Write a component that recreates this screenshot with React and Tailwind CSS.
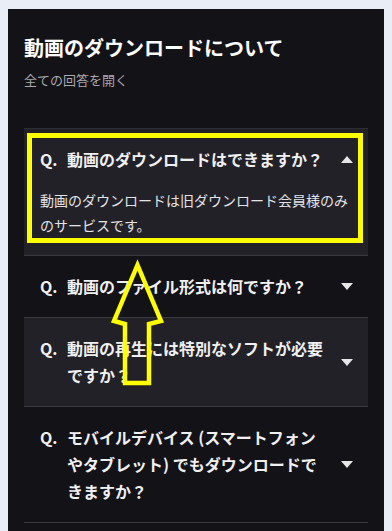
import React from 'react'

const FONT = { fontFamily: '"Noto Sans CJK JP", "Noto Sans", sans-serif' }

const ITEMS = [
  {
    q: '動画のダウンロードはできますか？',
    a: '動画のダウンロードは旧ダウンロード会員様のみのサービスです。',
    open: true,
  },
  { q: '動画のファイル形式は何ですか？' },
  { q: '動画の再生には特別なソフトが必要ですか？' },
  { q: 'モバイルデバイス (スマートフォンやタブレット) でもダウンロードできますか？' },
]

function Caret({ up }) {
  return (
    <svg width="12" height="7" viewBox="0 0 12 7" className="shrink-0">
      {up ? <polygon points="0,7 12,7 6,0" fill="#e6e6e6" /> : <polygon points="0,0 12,0 6,7" fill="#e6e6e6" />}
    </svg>
  )
}

export default function App() {
  return (
    <div className="relative h-[531px] bg-[#e9edf5] pt-[9px] px-2 overflow-hidden" style={FONT}>
      <div className="bg-[#131217] h-full px-4 pt-[25px]">
        <h2 className="text-[20px] leading-[28px] font-bold text-white">動画のダウンロードについて</h2>
        <p className="mt-2 text-[13px] leading-5 text-[#a9a9ae]">全ての回答を開く</p>

        <div className="mt-[38px] border-t border-[#2e2d33]">
          {ITEMS.map((item, i) => (
            <div
              key={i}
              className={`border-b border-[#3a3940] ${i % 2 === 0 ? 'bg-[#222127]' : 'bg-[#131217]'} pl-4 pr-[15px] py-[17px]`}
            >
              <div className="flex items-center">
                <div className="flex flex-1 text-[16px] leading-[27px] font-bold text-[#f0f0f2]">
                  <span className="w-[27px] shrink-0">Q.</span>
                  <span className="w-[260px]">{item.q}</span>
                </div>
                <Caret up={item.open} />
              </div>
              {item.open && (
                <p className="mt-[15px] text-[14px] leading-[25px] text-[#e4e4e8]">{item.a}</p>
              )}
            </div>
          ))}
        </div>
      </div>

      <div className="absolute left-[27px] top-[133px] w-[336px] h-[110px] border-[5px] border-[#ffff00]" />
      <svg className="absolute left-0 top-0" width="392" height="531" viewBox="0 0 392 531">
        <polygon
          points="137.5,265 161,321 149,324 149,383 125,383 125,324 114,321"
          fill="none"
          stroke="#ffff00"
          strokeWidth="4.5"
          strokeLinejoin="miter"
        />
      </svg>
    </div>
  )
}
